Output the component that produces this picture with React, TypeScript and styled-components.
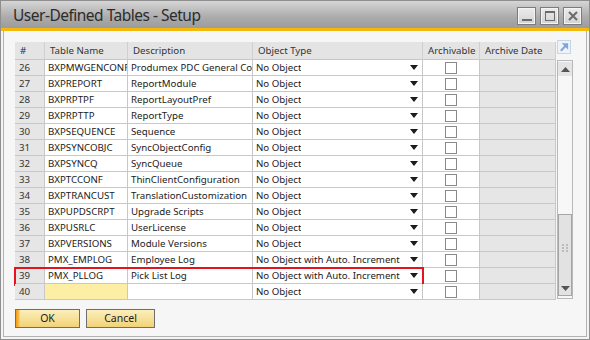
import React from "react"
import styled, { createGlobalStyle } from "styled-components"

type Row = {
  no: number
  name: string
  desc: string
  type: string
  pending?: boolean
  marked?: boolean
}

const rows: Row[] = [
  { no: 26, name: "BXPMWGENCONFIG", desc: "Produmex PDC General Configuration", type: "No Object" },
  { no: 27, name: "BXPREPORT", desc: "ReportModule", type: "No Object" },
  { no: 28, name: "BXPRPTPF", desc: "ReportLayoutPref", type: "No Object" },
  { no: 29, name: "BXPRPTTP", desc: "ReportType", type: "No Object" },
  { no: 30, name: "BXPSEQUENCE", desc: "Sequence", type: "No Object" },
  { no: 31, name: "BXPSYNCOBJC", desc: "SyncObjectConfig", type: "No Object" },
  { no: 32, name: "BXPSYNCQ", desc: "SyncQueue", type: "No Object" },
  { no: 33, name: "BXPTCCONF", desc: "ThinClientConfiguration", type: "No Object" },
  { no: 34, name: "BXPTRANCUST", desc: "TranslationCustomization", type: "No Object" },
  { no: 35, name: "BXPUPDSCRPT", desc: "Upgrade Scripts", type: "No Object" },
  { no: 36, name: "BXPUSRLC", desc: "UserLicense", type: "No Object" },
  { no: 37, name: "BXPVERSIONS", desc: "Module Versions", type: "No Object" },
  { no: 38, name: "PMX_EMPLOG", desc: "Employee Log", type: "No Object with Auto. Increment" },
  { no: 39, name: "PMX_PLLOG", desc: "Pick List Log", type: "No Object with Auto. Increment", marked: true },
  { no: 40, name: "", desc: "", type: "No Object", pending: true },
]

const COLS = "30px 83px 125px 170px 57px 76px"

export default function App() {
  return (
    <>
      <GlobalStyle />
      <Window>
        <TitleBar>
          <Title>User-Defined Tables - Setup</Title>
          <Controls>
            <CtrlButton aria-label="minimize">
              <svg width="12" height="12" viewBox="0 0 12 12">
                <rect x="1" y="9" width="10" height="2" fill="#6b6b6b" />
              </svg>
            </CtrlButton>
            <CtrlButton aria-label="maximize">
              <svg width="12" height="12" viewBox="0 0 12 12">
                <rect x="1.5" y="1.5" width="9" height="9" fill="none" stroke="#6b6b6b" strokeWidth="1" />
                <rect x="1" y="1" width="10" height="2" fill="#6b6b6b" />
              </svg>
            </CtrlButton>
            <CtrlButton aria-label="close">
              <svg width="12" height="12" viewBox="0 0 12 12">
                <path d="M2 2 L10 10 M10 2 L2 10" stroke="#6b6b6b" strokeWidth="2" />
              </svg>
            </CtrlButton>
          </Controls>
        </TitleBar>
        <Accent />
        <Body>
          <GridArea>
            <Table>
              <HeadRow>
                <HeadCell>#</HeadCell>
                <HeadCell>Table Name</HeadCell>
                <HeadCell>Description</HeadCell>
                <HeadCell>Object Type</HeadCell>
                <HeadCell>Archivable</HeadCell>
                <HeadCell>Archive Date</HeadCell>
              </HeadRow>
              {rows.map(r => (
                <BodyRow key={r.no}>
                  <NumCell>{r.no}</NumCell>
                  <TextCell $pending={r.pending}>{r.name}</TextCell>
                  <TextCell>{r.desc}</TextCell>
                  <SelectCell>
                    <span>{r.type}</span>
                    <svg width="8" height="5" viewBox="0 0 8 5">
                      <polygon points="0,0 8,0 4,5" fill="#1c1c1c" />
                    </svg>
                  </SelectCell>
                  <CheckCell>
                    <Check />
                  </CheckCell>
                  <GrayCell />
                  {r.marked && <Marker />}
                </BodyRow>
              ))}
            </Table>
            <Side>
              <Expand>
                <svg width="13" height="13" viewBox="0 0 13 13">
                  <path d="M3 10 L10 3" stroke="#7ea6d8" strokeWidth="2.2" />
                  <polygon points="4,2 11,2 11,9" fill="#7ea6d8" />
                </svg>
              </Expand>
              <ScrollBar>
                <ScrollBtn>
                  <svg width="9" height="5" viewBox="0 0 9 5">
                    <polygon points="0,5 9,5 4.5,0" fill="#555" />
                  </svg>
                </ScrollBtn>
                <Track />
                <Thumb>
                  <Grip>
                    <svg width="6" height="8" viewBox="0 0 6 8">
                      {[0, 3, 6].map(y => (
                        <g key={y}>
                          <rect x="0" y={y} width="2" height="2" fill="#bbb" />
                          <rect x="4" y={y} width="2" height="2" fill="#bbb" />
                        </g>
                      ))}
                    </svg>
                  </Grip>
                  <ScrollBtn>
                    <svg width="9" height="5" viewBox="0 0 9 5">
                      <polygon points="0,0 9,0 4.5,5" fill="#555" />
                    </svg>
                  </ScrollBtn>
                </Thumb>
              </ScrollBar>
            </Side>
          </GridArea>
          <Footer>
            <Button $focused>OK</Button>
            <Button $w={69}>Cancel</Button>
          </Footer>
        </Body>
      </Window>
    </>
  )
}

const GlobalStyle = createGlobalStyle`
  html, body {
    margin: 0;
    padding: 0;
    background: #fff;
  }
  body {
    font-family: "Noto Sans", "Open Sans", sans-serif;
  }
`

const Window = styled.div`
  width: 590px;
  height: 340px;
  box-sizing: border-box;
  border: 1px solid #8e8e8e;
  background: #f4f4f4;
  display: flex;
  flex-direction: column;
`

const TitleBar = styled.div`
  height: 27px;
  display: flex;
  align-items: flex-start;
  justify-content: space-between;
  padding: 0 7px 0 12px;
  background: linear-gradient(#d6d6d6, #ababab 60%, #9c9c9c);
`

const Title = styled.div`
  font-size: 15.5px;
  line-height: 28px;
  color: #2c2c2c;
  letter-spacing: -0.5px;
`

const Controls = styled.div`
  display: flex;
  gap: 4px;
  margin-top: 6px;
`

const CtrlButton = styled.div`
  width: 19px;
  height: 18px;
  box-sizing: border-box;
  border: 1px solid #7c7c7c;
  box-shadow: inset 0 0 0 1px #f4f4f4;
  background: linear-gradient(#ececec, #d2d2d2);
  display: flex;
  align-items: center;
  justify-content: center;
`

const Accent = styled.div`
  height: 3px;
  background: #f5b90c;
`

const Body = styled.div`
  flex: 1;
  margin: 0 2px 2px;
  border: 1px solid #b2b2b2;
  border-top: none;
  background: #f6f6f6;
  padding: 9px 0 0 11px;
  display: flex;
  flex-direction: column;
`

const GridArea = styled.div`
  display: flex;
  align-items: flex-start;
`

const Table = styled.div`
  display: flex;
  flex-direction: column;
  margin-top: 2px;
  font-size: 9.7px;
  color: #1b1b1b;
`

const HeadRow = styled.div`
  display: grid;
  grid-template-columns: ${COLS};
  height: 18px;
`

const HeadCell = styled.div`
  box-sizing: border-box;
  background: #e4e4e4;
  border-right: 1px solid #cfcfcf;
  border-bottom: 1px solid #c6c6c6;
  padding: 0 5px;
  line-height: 17px;
  color: #333;
  white-space: nowrap;
  overflow: hidden;
`

const BodyRow = styled.div`
  position: relative;
  display: grid;
  grid-template-columns: ${COLS};
  height: 16px;
`

const Cell = styled.div`
  box-sizing: border-box;
  border-right: 1px solid #c8c8c8;
  border-bottom: 1px solid #c8c8c8;
  padding: 0 3px;
  line-height: 15px;
  white-space: nowrap;
  overflow: hidden;
  background: #fff;
`

const NumCell = styled(Cell)`
  background: #e6e6e6;
  padding-left: 4px;
  color: #333;
`

const TextCell = styled(Cell)<{ $pending?: boolean }>`
  background: ${p => (p.$pending ? "#fdeea6" : "#fff")};
`

const SelectCell = styled(Cell)`
  display: flex;
  align-items: center;
  justify-content: space-between;
  padding-right: 4px;

  span {
    overflow: hidden;
  }
  svg {
    flex: none;
  }
`

const CheckCell = styled(Cell)`
  display: flex;
  align-items: center;
  justify-content: center;
`

const Check = styled.div`
  width: 12px;
  height: 12px;
  box-sizing: border-box;
  border: 1px solid #8a8a8a;
  background: #fff;
`

const GrayCell = styled(Cell)`
  background: #e6e6e6;
`

const Marker = styled.div`
  position: absolute;
  left: -1px;
  top: -1px;
  width: 410px;
  height: 19px;
  box-sizing: border-box;
  border: 2px solid #e3141e;
  pointer-events: none;
`

const Side = styled.div`
  display: flex;
  flex-direction: column;
  margin-left: 1px;
  gap: 6px;
`

const Expand = styled.div`
  width: 14px;
  height: 14px;
  box-sizing: border-box;
  border: 1px solid #c5d5ea;
  background: #eef3fa;
  display: flex;
  align-items: center;
  justify-content: center;
`

const ScrollBar = styled.div`
  width: 16px;
  height: 239px;
  box-sizing: border-box;
  border: 1px solid #b8b8b8;
  background: #f7f7f7;
  display: flex;
  flex-direction: column;
  padding: 1px 0 0;
`

const ScrollBtn = styled.div`
  height: 14px;
  width: 14px;
  background: #e4e4e4;
  display: flex;
  align-items: center;
  justify-content: center;
  flex: none;
`

const Track = styled.div`
  flex: 1;
`

const Thumb = styled.div`
  height: 82px;
  box-sizing: border-box;
  border: 1px solid #a6a6a6;
  background: #e2e2e2;
  display: flex;
  flex-direction: column;
  align-items: center;
  margin-bottom: 2px;
  ${ScrollBtn} {
    width: 12px;
    background: transparent;
  }
`

const Grip = styled.div`
  flex: 1;
  display: flex;
  align-items: center;
`

const Footer = styled.div`
  display: flex;
  gap: 6px;
  margin-top: 9px;
`

const Button = styled.div<{ $focused?: boolean; $w?: number }>`
  width: ${p => p.$w ?? 65}px;
  height: 19px;
  box-sizing: border-box;
  border: 1px solid #6e6e6e;
  background: ${p =>
    p.$focused
      ? "linear-gradient(90deg, #f29a12 0, #f6c24a 3px, transparent 4px), linear-gradient(#fcefbd, #f1d277)"
      : "linear-gradient(#fcefbd, #f1d277)"};
  font-size: 10.5px;
  line-height: 17px;
  color: #222;
  text-align: center;
`
